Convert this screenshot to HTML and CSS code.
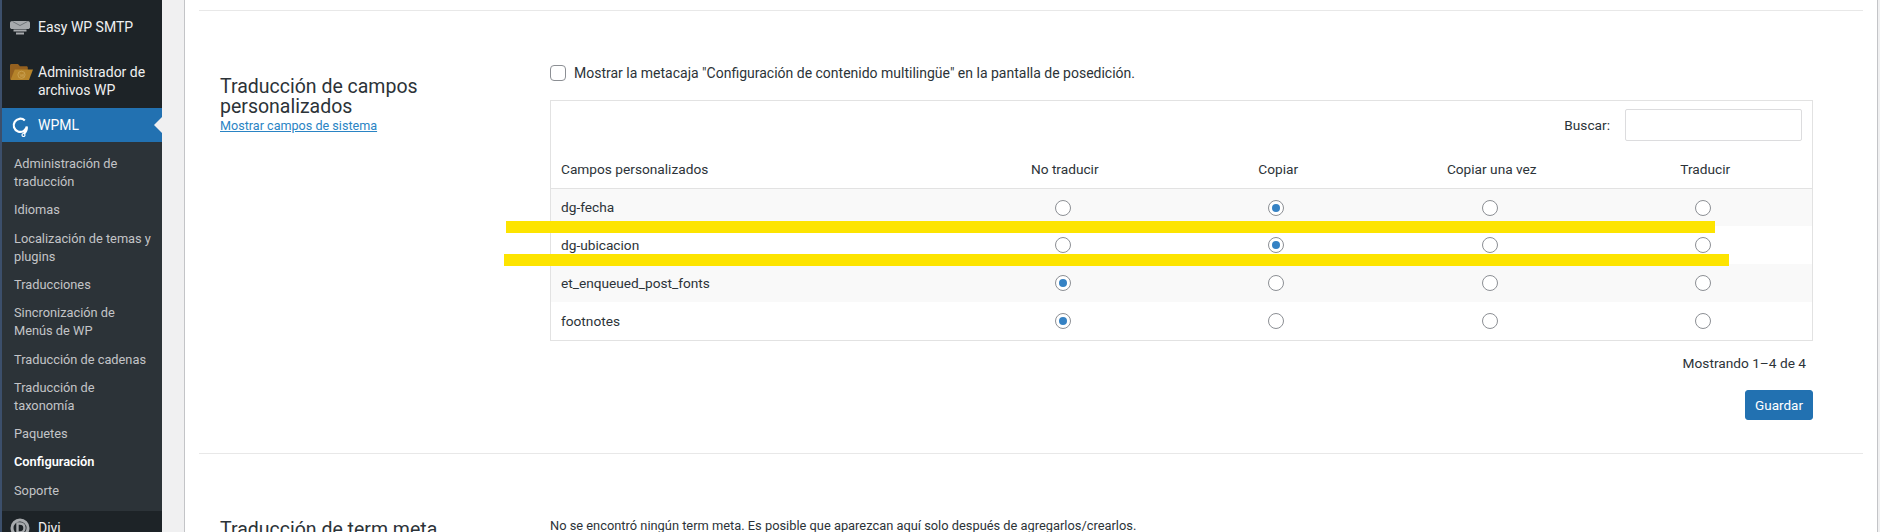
FILE: index.html
```html
<!DOCTYPE html>
<html lang="es">
<head>
<meta charset="utf-8">
<title>WPML Configuración</title>
<link rel="stylesheet" href="styles.css">
</head>
<body>
<nav class="sidebar">
  <a class="item"><svg class="icon" viewBox="0 0 24 20" width="24" height="20"><path class="i-mail" d="M1 5C1 3.800 2 3 3.400 3H18.600C20 3 21 3.800 21 5V9.500C21 10.400 20 11 19 11H3C2 11 1 10.400 1 9.500Z"/><path class="i-flap" d="M3.500 3.500 11 7.500 18.500 3.500"/><rect class="i-mail" x="4.500" y="11.500" width="13" height="2"/><rect class="i-mail" x="7" y="14.500" width="8" height="2"/></svg><span>Easy WP SMTP</span></a>
  <a class="item item-file"><svg class="icon" viewBox="0 0 24 20" width="24" height="20"><path class="i-back" d="M1 3.500C1 2.700 1.600 2 2.400 2H9l2 2.200h6.500c.8 0 1.300.6 1.300 1.300V18H2.400C1.600 18 1 17.400 1 16.600Z"/><path class="i-front" d="M5.800 7.500H24l-4 10.500H1.500Z"/><circle class="i-wp" cx="12.500" cy="12.800" r="3.600"/><path class="i-wpline" d="M10.800 11.500l1.300 3.300 1-2.600.9 2.600 1-3.300"/></svg><span>Administrador de archivos WP</span></a>
  <a class="item current"><svg class="icon" viewBox="0 0 24 20" width="24" height="20"><path class="i-wpml" d="M15.800 3.500A6.600 6.600 0 1 0 17.800 9.500C18 11.800 17.300 14.500 15 16.800"/><circle class="i-wpml-dot" cx="14.500" cy="18" r="1.500"/></svg><span>WPML</span></a>
  <div class="sub">
    <a class="sub-item">Administración de traducción</a>
    <a class="sub-item">Idiomas</a>
    <a class="sub-item">Localización de temas y plugins</a>
    <a class="sub-item">Traducciones</a>
    <a class="sub-item">Sincronización de Menús de WP</a>
    <a class="sub-item">Traducción de cadenas</a>
    <a class="sub-item">Traducción de taxonomía</a>
    <a class="sub-item">Paquetes</a>
    <a class="sub-item active">Configuración</a>
    <a class="sub-item">Soporte</a>
  </div>
  <a class="item item-divi"><svg class="icon" viewBox="0 0 24 20" width="24" height="20"><circle class="i-divi" cx="11" cy="10" r="8"/><path class="i-divi-d" d="M8.500 5.500h2.300c3 0 4.700 2 4.700 4.500s-1.700 4.500-4.700 4.500H8.500Z"/></svg><span>Divi</span></a>
</nav>
<main class="main">
  <div class="card">
    <div class="top-rule"></div>
    <section class="section section-fields">
      <div class="aside">
        <h3 class="title">Traducción de campos personalizados</h3>
        <a class="link">Mostrar campos de sistema</a>
      </div>
      <div class="content">
        <label class="check-row"><input type="checkbox" class="check"><span>Mostrar la metacaja "Configuración de contenido multilingüe" en la pantalla de posedición.</span></label>
        <div class="table-box">
          <div class="toolbar"><label class="search-label" for="buscar">Buscar:</label><input class="search" id="buscar" type="text"></div>
          <table class="fields">
            <colgroup><col class="col-name"><col><col><col><col></colgroup>
            <thead>
              <tr><th class="name">Campos personalizados</th><th>No traducir</th><th>Copiar</th><th>Copiar una vez</th><th>Traducir</th></tr>
            </thead>
            <tbody>
              <tr><td class="name">dg-fecha</td><td><input type="radio" name="r1"></td><td><input type="radio" name="r1" checked></td><td><input type="radio" name="r1"></td><td><input type="radio" name="r1"></td></tr>
              <tr><td class="name">dg-ubicacion</td><td><input type="radio" name="r2"></td><td><input type="radio" name="r2" checked></td><td><input type="radio" name="r2"></td><td><input type="radio" name="r2"></td></tr>
              <tr><td class="name">et_enqueued_post_fonts</td><td><input type="radio" name="r3" checked></td><td><input type="radio" name="r3"></td><td><input type="radio" name="r3"></td><td><input type="radio" name="r3"></td></tr>
              <tr><td class="name">footnotes</td><td><input type="radio" name="r4" checked></td><td><input type="radio" name="r4"></td><td><input type="radio" name="r4"></td><td><input type="radio" name="r4"></td></tr>
            </tbody>
          </table>
        </div>
        <p class="count">Mostrando 1–4 de 4</p>
        <div class="actions"><button class="save" type="button">Guardar</button></div>
      </div>
    </section>
    <section class="section section-term">
      <div class="aside">
        <h3 class="title">Traducción de term meta</h3>
      </div>
      <div class="content">
        <p class="note">No se encontró ningún term meta. Es posible que aparezcan aquí solo después de agregarlos/crearlos.</p>
      </div>
    </section>
  </div>
</main>
<div class="mark mark-one"></div>
<div class="mark mark-two"></div>
</body>
</html>
```
FILE: styles.css
```css
* { box-sizing: border-box; }
html, body { margin: 0; height: 532px; overflow: hidden; }
body {
  position: relative;
  display: flex;
  background: #f0f0f1;
  font-family: Roboto, "Open Sans", sans-serif;
  font-size: 14px;
  line-height: 18px;
  color: #2c3338;
}

/* Sidebar */
.sidebar {
  flex: 0 0 162px;
  height: 532px;
  overflow: hidden;
  padding-top: 9px;
  background: #1d2327;
  border-left: 2px solid #3c4f6b;
  color: #f0f0f1;
}
.item {
  display: flex;
  align-items: flex-start;
  padding: 9px 8px 9px 36px;
  position: relative;
}
.icon { position: absolute; left: 7px; top: 9px; }
.item-file { margin-top: 9px; }
.item-file .icon { top: 8px; }
.current {
  background: #2271b1;
  color: #fff;
  padding-top: 8px;
  padding-bottom: 8px;
}
.current .icon { top: 9px; }
.current::after {
  content: "";
  position: absolute;
  right: 0;
  top: 9px;
  border: 8px solid transparent;
  border-left-width: 0;
  border-right-color: #f0f0f1;
}
.sub { background: #2c3338; padding: 8px 0 6px; }
.sub-item {
  display: block;
  padding: 5px 8px 5px 12px;
  font-size: 12.800px;
  line-height: 18.200px;
  color: #c3c4c7;
}
.active { color: #fff; font-weight: 600; }
.item-divi .icon { top: 7px; }
.item-divi { padding-top: 8px; }
.i-mail { fill: #a7aaad; }
.i-flap { fill: none; stroke: #6f7478; stroke-width: 1; }
.i-back { fill: #94601f; }
.i-front { fill: #b5832a; }
.i-wp { fill: none; stroke: #d6b36a; stroke-width: .8; opacity: .7; }
.i-wpline { fill: none; stroke: #d6b36a; stroke-width: .6; opacity: .7; }
.i-wpml { fill: none; stroke: #fff; stroke-width: 2.200; }
.i-wpml-dot { fill: none; stroke: #fff; stroke-width: 1.200; }
.i-divi { fill: none; stroke: #a7aaad; stroke-width: 3; }
.i-divi-d { fill: none; stroke: #a7aaad; stroke-width: 2.400; }

/* Main */
.main { flex: 1; padding: 0 2px 0 22px; min-width: 0; }
.card {
  height: 532px;
  background: #fff;
  border-left: 1px solid #c3c4c7;
  border-right: 1px solid #c3c4c7;
  padding: 10px 14px 0;
}
.top-rule { height: 1px; background: #e8e8e8; }
.section {
  display: flex;
  padding: 54px 50px 0 21px;
}
.section-fields { border-bottom: 1px solid #e8e8e8; padding-bottom: 33px; }
.aside { flex: 0 0 330px; padding: 12px 40px 0 0; }
.title {
  margin: 0;
  font-size: 19.500px;
  line-height: 20px;
  font-weight: 400;
  color: #2c3338;
}
.link { color: #2a84c4; text-decoration: underline; display: block; font-size: 12.600px; }
.content { flex: 1; min-width: 0; }

.check-row { display: flex; align-items: center; height: 16px; margin-bottom: 19px; }
.check {
  appearance: none;
  width: 16px;
  height: 16px;
  margin: 0 8px 0 0;
  background: #fff;
  border: 1px solid #8c8f94;
  border-radius: 4px;
}

.table-box { border: 1px solid #e2e2e2; font-size: 13.700px; }
.toolbar {
  display: flex;
  justify-content: flex-end;
  align-items: center;
  height: 48px;
  padding: 8px 10px;
  gap: 15px;
}
.search {
  width: 177px;
  height: 32px;
  background: #fff;
  border: 1px solid #dcdcde;
  border-radius: 2px;
}
.fields { width: 100%; table-layout: fixed; border-collapse: collapse; }
.col-name { width: 407px; }
.fields th {
  height: 39px;
  padding: 1px 0 0;
  font-weight: 400;
  text-align: center;
  border-bottom: 1px solid #e2e2e2;
}
.fields td { height: 38px; padding: 0; text-align: center; }
.fields th.name, .fields td.name { text-align: left; padding-left: 10px; }
.fields tbody tr:nth-child(odd) { background: #f9f9f9; }
input[type="radio"] {
  appearance: none;
  display: inline-block;
  vertical-align: middle;
  width: 16px;
  height: 16px;
  margin: -2px 4px 0 0;
  background: #fff;
  border: 1px solid #8c8f94;
  border-radius: 50%;
}
input[type="radio"]:checked::before {
  content: "";
  display: block;
  width: 8px;
  height: 8px;
  margin: 3px;
  border-radius: 50%;
  background: #3582c4;
}

.count { margin: 13px 7px 0 0; text-align: right; font-size: 13.700px; }
.actions { display: flex; justify-content: flex-end; margin-top: 18px; }
.save {
  width: 68px;
  height: 30px;
  padding: 0;
  border: 1px solid #2271b1;
  border-radius: 3px;
  background: #2271b1;
  color: #fff;
  font: inherit;
  font-size: 13.500px;
}
.note { margin: 9px 0 0; font-size: 12.850px; }

/* Yellow highlighter strokes drawn over the screenshot */
.mark { position: absolute; height: 12px; background: #fde400; }
.mark-one { left: 506px; top: 221px; width: 1209px; }
.mark-two { left: 504px; top: 254px; width: 1225px; }
```
